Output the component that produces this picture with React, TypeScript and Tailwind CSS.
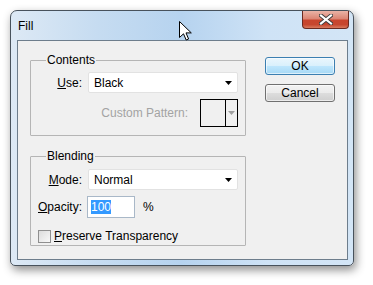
import React from "react";

const font = { fontFamily: '"Liberation Sans", Arial, sans-serif' };

const Arrow = ({ color = "#000" }: { color?: string }) => (
    <svg width="7" height="4" viewBox="0 0 7 4">
        <path d="M0 0H7L3.5 4Z" fill={color}/>
    </svg>
);

const Select = ({ value }: { value: string }) => (
    <div
        className="w-[150px] h-[21px] flex items-center justify-between pl-[5px] pr-[5px] bg-white border border-[#e2e2e2] rounded-[2px] text-black">
        <span>{value}</span>
        <Arrow/>
    </div>
);

const Group = ({ title, h, children }: { title: string; h: string; children: React.ReactNode }) => (
    <div className={`relative w-[216px] ${h} border border-[#b5b5b5] rounded-[1px]`}>
        <span className="absolute -top-[9px] left-[15px] px-[1px] bg-[#f0f0f0] leading-[16px]">{title}</span>
        {children}
    </div>
);

const App = () => {
    return (
        <div className="relative w-[373px] h-[285px] bg-white pl-[10px] pt-[10px] text-[12px] text-black" style={font}>

            <div
                className="w-[344px] h-[256px] flex flex-col rounded-t-[7px] rounded-b-[5px] border border-[#48525c] shadow-[2px_4px_10px_rgba(0,0,0,0.45)] bg-[linear-gradient(90deg,#dde9f5_0%,#c6dcf1_25%,#b6d3ef_50%,#cfe3f6_75%,#d3e5f6_100%)]">

                <div className="h-[29px] flex items-start justify-between">
                    <span className="pl-[7px] pt-[7px] leading-[16px]">Fill</span>
                    <div
                        className="mr-[4px] w-[47px] h-[18px] flex items-center justify-center rounded-b-[4px] border border-t-0 border-[#6b2a20] bg-[linear-gradient(180deg,#eab3a6_0%,#dc8675_45%,#c9452e_55%,#c6472f_80%,#d97a5e_100%)]">
                        <svg width="14" height="11" viewBox="0 0 14 11">
                            <path d="M2 1.5L12 9.5M12 1.5L2 9.5" stroke="#3a3a3a" strokeWidth="4" strokeLinecap="square"/>
                            <path d="M2 1.5L12 9.5M12 1.5L2 9.5" stroke="#fff" strokeWidth="2.2" strokeLinecap="square"/>
                        </svg>
                    </div>
                </div>

                <div
                    className="ml-[6px] mr-[5px] mb-[5px] flex-1 flex items-start bg-[#f0f0f0] border border-[#6d7d8c] pl-[12px]">

                    <div className="flex flex-col pt-[19px]">
                        <Group title="Contents" h="h-[76px]">
                            <div className="flex flex-col pt-[11px] pr-[7px]">
                                <div className="flex items-center justify-end gap-[6px]">
                                    <span><u>U</u>se:</span>
                                    <Select value="Black"/>
                                </div>
                                <div className="flex items-center justify-end gap-[12px] mt-[6px]">
                                    <span className="text-[#a3a3a3]">Custom Pattern:</span>
                                    <div className="w-[38px] h-[28px] flex border border-black bg-[#f0f0f0]">
                                        <div className="w-[25px] border-r border-black"></div>
                                        <div className="flex-1 flex items-center justify-center">
                                            <Arrow color="#a0a0a0"/>
                                        </div>
                                    </div>
                                </div>
                            </div>
                        </Group>

                        <div className="mt-[20px]">
                            <Group title="Blending" h="h-[90px]">
                                <div className="flex flex-col pt-[12px] pr-[7px]">
                                    <div className="flex items-center justify-end gap-[6px]">
                                        <span><u>M</u>ode:</span>
                                        <Select value="Normal"/>
                                    </div>
                                    <div className="flex items-center mt-[6px] pl-[7px]">
                                        <span className="w-[49px]"><u>O</u>pacity:</span>
                                        <div
                                            className="w-[48px] h-[22px] flex items-center pl-[3px] bg-white border border-[#a9b8c8]">
                                            <span className="bg-[#3399ff] text-white leading-[14px]">100</span>
                                        </div>
                                        <span className="ml-[8px]">%</span>
                                    </div>
                                    <div className="flex items-center gap-[3px] mt-[9px] pl-[7px]">
                                        <div
                                            className="w-[13px] h-[13px] border border-[#8f8f8f] bg-[linear-gradient(135deg,#dcdcdc,#f8f8f8)]"></div>
                                        <span><u>P</u>reserve Transparency</span>
                                    </div>
                                </div>
                            </Group>
                        </div>
                    </div>

                    <div className="flex flex-col gap-[9px] ml-[19px] pt-[16px]">
                        <button
                            className="w-[70px] h-[18px] flex items-center justify-center rounded-[3px] border border-[#3c7fb1] bg-[linear-gradient(180deg,#eaf6fd_0%,#d9f0fc_50%,#bee6fd_51%,#a7d9f5_100%)] shadow-[inset_0_0_0_1px_rgba(255,255,255,0.6)] leading-[14px]">
                            OK
                        </button>
                        <button
                            className="w-[70px] h-[18px] flex items-center justify-center rounded-[3px] border border-[#707070] bg-[linear-gradient(180deg,#f2f2f2_0%,#ebebeb_50%,#dddddd_51%,#cfcfcf_100%)] shadow-[inset_0_0_0_1px_rgba(255,255,255,0.6)] leading-[14px]">
                            Cancel
                        </button>
                    </div>
                </div>
            </div>

            <svg className="absolute left-[179px] top-[21px]" width="13" height="20" viewBox="0 0 13 20">
                <path d="M0.5 0.5V16.5L4.5 12.8L7.2 19L9.6 18L7 11.9H12.3Z" fill="#fff" stroke="#000" strokeWidth="1"
                      strokeLinejoin="round"/>
            </svg>
        </div>
    );
};

export default App;
